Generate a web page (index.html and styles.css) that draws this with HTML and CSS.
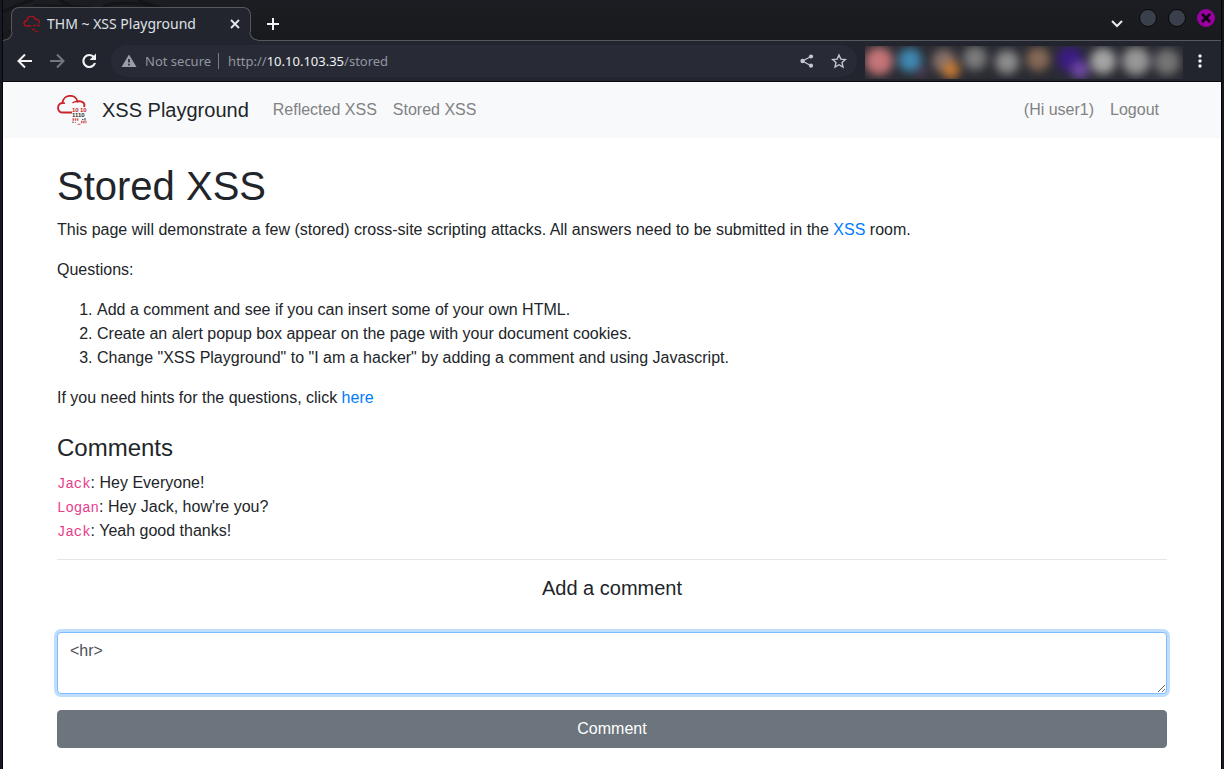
FILE: index.html
```html
<!DOCTYPE html>
<html lang="en">
<head>
<meta charset="utf-8">
<meta name="viewport" content="width=device-width, initial-scale=1">
<title>THM ~ XSS Playground</title>
<link rel="stylesheet" href="styles.css">
</head>
<body>
<div class="window">
  <header class="chrome">
    <div class="tab-strip">
      <svg class="wallpaper" width="300" height="40" viewBox="0 0 300 40" aria-hidden="true">
        <g fill="none" stroke="#131519">
          <path stroke-width="3" d="M0 12Q14 4 30 0M56 0 70 7M100 6Q120 0 150 6M0 36 8 31"/>
          <path stroke-width="2" d="M30 5 90 7M135 0 166 10"/>
        </g>
      </svg>
      <div class="tab">
        <svg class="favicon" width="18" height="18" viewBox="0 0 18 18" aria-hidden="true">
          <path fill="none" stroke="#b01217" stroke-width="1.300" d="M8 11H4C0 11 0 6 4 5.500 4.500.500 11 0 12.500 4.500 15.500 4 17 6 16 8.500"/>
          <path fill="none" stroke="#961318" stroke-width="1.300" stroke-dasharray="3 1" d="M10 10.500h7M9 14.500h4M12 16.500h4"/>
        </svg>
        <span class="tab-title">THM ~ XSS Playground</span>
        <button class="icon-button" type="button" aria-label="Close tab">
          <svg width="16" height="16" viewBox="0 0 16 16"><path fill="none" stroke="#e8eaed" stroke-width="1.800" d="m4 4 8 8M12 4l-8 8"/></svg>
        </button>
      </div>
      <button class="icon-button new-tab" type="button" aria-label="New tab">
        <svg width="16" height="16" viewBox="0 0 16 16"><path stroke="#f1f3f4" stroke-width="2" d="M8 2v12M2 8h12"/></svg>
      </button>
      <div class="window-controls">
        <button class="icon-button tab-search" type="button" aria-label="Search tabs">
          <svg width="12" height="12" viewBox="0 0 12 12"><path fill="none" stroke="#e8eaed" stroke-width="2" d="m1 4 5 5 5-5"/></svg>
        </button>
        <button class="window-dot" type="button" aria-label="Minimize"></button>
        <button class="window-dot" type="button" aria-label="Maximize"></button>
        <button class="window-dot close" type="button" aria-label="Close">
          <svg width="16" height="16" viewBox="0 0 16 16"><path stroke="#0b0010" stroke-width="2.600" d="m4 4 8 8M12 4l-8 8"/></svg>
        </button>
      </div>
    </div>
    <div class="toolbar">
      <div class="history">
        <button class="icon-button" type="button" aria-label="Back">
          <svg width="16" height="16" viewBox="0 0 16 16"><path fill="none" stroke="#f1f3f4" stroke-width="2" d="M15 8H2M8 1.500 1.500 8 8 14.500"/></svg>
        </button>
        <button class="icon-button" type="button" aria-label="Forward">
          <svg width="16" height="16" viewBox="0 0 16 16"><path fill="none" stroke="#74777d" stroke-width="2" d="M1 8H14M8 1.500 14.500 8 8 14.500"/></svg>
        </button>
        <button class="icon-button" type="button" aria-label="Reload">
          <svg width="16" height="16" viewBox="0 0 16 16"><path fill="none" stroke="#f1f3f4" stroke-width="2.200" d="M13 4.200A6 6 0 1 0 14 10"/><path fill="#f1f3f4" d="M15 .500V7H8.500z"/></svg>
        </button>
      </div>
      <div class="address-bar">
        <svg width="16" height="16" viewBox="0 0 16 16" aria-hidden="true"><path fill="#9aa0a6" d="M8 1.500 15.500 14H.500z"/><path stroke="#282a35" stroke-width="1.700" d="M8 6v3.500M8 10.700v1.700"/></svg>
        <span class="security">Not secure</span>
        <span class="url">http://<b>10.10.103.35</b>/stored</span>
        <div class="address-actions">
          <button class="icon-button" type="button" aria-label="Share">
            <svg width="16" height="16" viewBox="0 0 16 16"><path fill="none" stroke="#c4c7cc" stroke-width="1.300" d="M12 3.500 3.500 8l8.500 4.800"/><g fill="#c4c7cc"><circle cx="12" cy="3.500" r="2.100"/><circle cx="3.600" cy="8" r="2.200"/><circle cx="12" cy="12.700" r="2.100"/></g></svg>
          </button>
          <button class="icon-button" type="button" aria-label="Bookmark this page">
            <svg width="16" height="16" viewBox="0 0 16 16"><path fill="none" stroke="#c4c7cc" stroke-width="1.400" d="m8 2 1.800 4.100 4.600.5-3.400 3 1 4.500L8 11.700l-4 2.400 1-4.500-3.400-3 4.600-.5z"/></svg>
          </button>
        </div>
      </div>
      <svg class="extensions" width="318" height="33" viewBox="0 0 318 33" role="img" aria-label="Extensions">
        <defs><filter id="soft" x="-10%" y="-50%" width="120%" height="200%" color-interpolation-filters="sRGB"><feGaussianBlur stdDeviation="5"/></filter></defs>
        <rect width="318" height="33" fill="#2a2b32"/>
        <g filter="url(#soft)">
          <circle cx="14" cy="15" r="14" fill="#c57578"/>
          <circle cx="45" cy="14" r="12" fill="#4088b0"/>
          <circle cx="57" cy="26" r="6" fill="#4c3a51"/>
          <circle cx="79" cy="15" r="12" fill="#84706b"/>
          <circle cx="86" cy="24" r="9" fill="#c67a34"/>
          <circle cx="110" cy="12" r="12" fill="#7b7b7b"/>
          <circle cx="142" cy="16" r="12" fill="#8c8c8c"/>
          <circle cx="173" cy="13" r="12" fill="#866956"/>
          <circle cx="205" cy="13" r="13" fill="#3a1c82"/>
          <circle cx="215" cy="24" r="9" fill="#7049a6"/>
          <circle cx="238" cy="15" r="13" fill="#a4a4a4"/>
          <circle cx="271" cy="15" r="14" fill="#969696"/>
          <circle cx="302" cy="16" r="13" fill="#747474"/>
        </g>
      </svg>
      <button class="icon-button menu" type="button" aria-label="Menu">
        <svg width="16" height="16" viewBox="0 0 16 16" fill="#f1f3f4"><circle cx="8" cy="3" r="1.700"/><circle cx="8" cy="8" r="1.700"/><circle cx="8" cy="13" r="1.700"/></svg>
      </button>
    </div>
  </header>

  <div class="page">
    <nav class="navbar">
      <div class="container navbar-inner">
        <a class="brand" href="#">
          <svg class="brand-logo" width="30" height="30" viewBox="0 0 30 30" aria-hidden="true">
            <path fill="none" stroke="#c9252b" stroke-width="1.900" d="M15 17.500H6C-.500 17.500-.500 8.500 5.500 8 6-1 19-1.500 20.500 6.500 25.500 5.500 28.500 8.500 27 12"/>
            <path fill="none" stroke="#c9252b" stroke-width="1.500" d="M15.500 8Q18 6 21 6.700M5.500 8 8 8.300"/>
            <g class="logo-digits" fill="#c9252b">
              <text x="15" y="17">10</text>
              <text x="23" y="17">10</text>
              <text x="15" y="22" fill="#333">1110</text>
            </g>
            <g fill="none" stroke="#c9252b" opacity=".75"><path stroke-width="2.500" stroke-dasharray="1.500 .7" d="M15.500 24.500h6.500M24 27h5.500"/><path d="M20.500 29.300h3M18 27.500h1"/></g>
            <path fill="none" stroke="#555" stroke-width="1.200" d="M25 24.500h1.500M28 23v2.500M16 26.500v1.500"/>
          </svg>
          <span>XSS Playground</span>
        </a>
        <a class="nav-link" href="#">Reflected XSS</a>
        <a class="nav-link" href="#">Stored XSS</a>
        <div class="account">
          <span class="nav-link">(Hi user1)</span>
          <a class="nav-link" href="#">Logout</a>
        </div>
      </div>
    </nav>

    <main class="container content">
      <h1>Stored XSS</h1>
      <p>This page will demonstrate a few (stored) cross-site scripting attacks. All answers need to be submitted in the <a href="#">XSS</a> room.</p>
      <p>Questions:</p>
      <ol>
        <li>Add a comment and see if you can insert some of your own HTML.</li>
        <li>Create an alert popup box appear on the page with your document cookies.</li>
        <li>Change "XSS Playground" to "I am a hacker" by adding a comment and using Javascript.</li>
      </ol>
      <p>If you need hints for the questions, click <a href="#">here</a></p>

      <section class="comments">
        <h2>Comments</h2>
        <div><code>Jack</code>: Hey Everyone!</div>
        <div><code>Logan</code>: Hey Jack, how're you?</div>
        <div><code>Jack</code>: Yeah good thanks!</div>
      </section>
      <hr>
      <form class="comment-form">
        <label for="comment">Add a comment</label>
        <textarea id="comment" name="comment" rows="2">&lt;hr&gt;</textarea>
        <button class="submit" type="button">Comment</button>
      </form>
    </main>
  </div>
</div>
</body>
</html>
```

FILE: styles.css
```css
*,
*::before,
*::after {
  box-sizing: border-box;
}

body {
  margin: 0;
  background: #171922;
  color: #212529;
  font: 16px/24px "Liberation Sans", Arial, sans-serif;
}

a {
  color: #007bff;
  text-decoration: none;
}

button {
  font: inherit;
}

.window {
  display: flex;
  flex-direction: column;
  min-height: 100vh;
  margin: 0 2px;
  border: solid #050608;
  border-width: 0 1px;
}

/* Browser chrome */
.chrome {
  border-bottom: 1px solid #08090b;
  font-family: "Noto Sans", sans-serif;
}

.icon-button {
  display: flex;
  align-items: center;
  justify-content: center;
  padding: 0;
  border: 0;
  background: none;
}

.tab-strip {
  position: relative;
  display: flex;
  height: 41px;
  padding: 7px 6px 0 8px;
  border-bottom: 1px solid #55585e;
  background: linear-gradient(#1c1d22, #191a1e);
}

.wallpaper {
  position: absolute;
  top: 0;
  left: 0;
}

.tab {
  position: relative;
  display: flex;
  align-items: center;
  width: 240px;
  height: 34px;
  padding: 0 7px 2px 11px;
  border: 1px solid #55585e;
  border-bottom: 0;
  border-radius: 8px 8px 0 0;
  background: #23252e;
}

/* Curved feet joining the active tab to the toolbar */
.tab::before,
.tab::after {
  content: "";
  position: absolute;
  bottom: 0;
  width: 9px;
  height: 9px;
}

.tab::before {
  right: 100%;
  margin-right: -1px;
  background: radial-gradient(circle at 0 0, #191a1e 7px, #55585e 8px, #23252e 9px);
}

.tab::after {
  left: 100%;
  margin-left: -1px;
  background: radial-gradient(circle at 100% 0, #191a1e 7px, #55585e 8px, #23252e 9px);
}

.tab-title {
  flex: 1;
  margin-left: 6px;
  color: #dfe1e5;
  font-size: 14px;
  line-height: 20px;
  white-space: nowrap;
}

.new-tab {
  width: 28px;
  margin-left: 8px;
}

.window-controls {
  position: relative;
  display: flex;
  align-items: flex-start;
  gap: 11px;
  margin-left: auto;
  padding-top: 2px;
}

.tab-search {
  margin: 8px 5px 0 0;
}

.window-dot {
  width: 18px;
  height: 18px;
  padding: 0;
  border: 1px solid #07080a;
  border-radius: 50%;
  background: #393f4b;
}

.window-dot.close {
  display: flex;
  align-items: center;
  justify-content: center;
  border-color: #9a009f;
  background: #9a009f;
}

.toolbar {
  display: flex;
  align-items: center;
  height: 40px;
  padding-right: 13px;
  background: #23252e;
}

.history {
  display: flex;
  gap: 16px;
  padding: 0 14px;
}

.address-bar {
  display: flex;
  flex: 1;
  align-items: center;
  height: 32px;
  padding: 0 10px;
  border-radius: 16px;
  background: #282a35;
  color: #9297a0;
  font-size: 13px;
  line-height: 16px;
}

.security {
  margin-left: 8px;
  padding-right: 7px;
  border-right: 1px solid #777b83;
}

.url {
  margin-left: 9px;
}

.url b {
  color: #f1f3f4;
  font-weight: 400;
}

.address-actions {
  display: flex;
  gap: 16px;
  margin-left: auto;
}

.extensions {
  margin: 2px 9px 0 8px;
}

/* Site */
.page {
  flex: 1;
  background: #fff;
}

.container {
  width: 100%;
  max-width: 1140px;
  margin: 0 auto;
  padding: 0 15px;
}

.navbar {
  background: #f8f9fa;
}

.navbar-inner {
  display: flex;
  align-items: center;
  min-height: 56px;
}

.brand {
  display: flex;
  align-items: center;
  gap: 15px;
  margin-right: 16px;
  color: #212529;
  font-size: 20px;
  line-height: 30px;
}

.logo-digits {
  font: bold 6px "Liberation Sans", Arial, sans-serif;
}

.nav-link {
  padding: 8px;
  color: #818283;
}

.account {
  display: flex;
  margin-left: auto;
}

.content {
  padding-top: 24px;
  padding-bottom: 20px;
}

h1,
h2 {
  margin: 0 0 8px;
  font-weight: 400;
}

h1 {
  font-size: 40px;
  line-height: 48px;
}

h2 {
  margin-bottom: 9px;
  font-size: 24px;
  line-height: 28px;
}

p,
ol {
  margin: 0 0 16px;
}

ol {
  padding-left: 40px;
}

.comments {
  margin-top: 24px;
}

code {
  color: #e83e8c;
  font: 14px "Liberation Mono", monospace;
}

hr {
  margin: 16px 0;
  border: 0;
  border-top: 1px solid #e5e5e5;
}

.comment-form {
  display: flex;
  flex-direction: column;
}

.comment-form label {
  margin-bottom: 32px;
  font-size: 20px;
  text-align: center;
}

.comment-form textarea {
  display: block;
  width: 100%;
  margin: 0 0 16px;
  padding: 6px 12px;
  border: 1px solid #80bdff;
  border-radius: 4px;
  outline: 0;
  background: #fff;
  box-shadow: 0 0 0 3px #bfdeff;
  color: #495057;
  font: inherit;
  resize: vertical;
}

.submit {
  padding: 6px 12px;
  border: 1px solid #6c757d;
  border-radius: 4px;
  background: #6c757d;
  color: #fff;
}
```
